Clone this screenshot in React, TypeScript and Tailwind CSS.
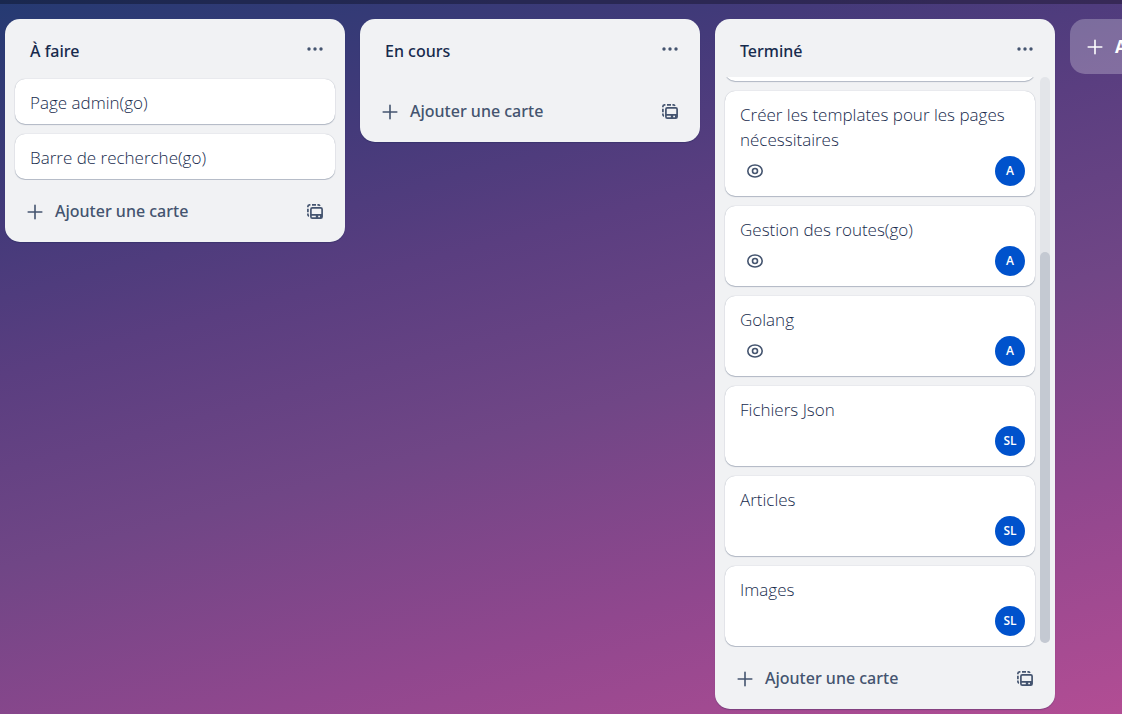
type Card = { title: string; watched?: boolean; member?: string };

const todo: Card[] = [{ title: "Page admin(go)" }, { title: "Barre de recherche(go)" }];

const done: Card[] = [
  { title: "Créer les templates pour les pages nécessitaires", watched: true, member: "A" },
  { title: "Gestion des routes(go)", watched: true, member: "A" },
  { title: "Golang", watched: true, member: "A" },
  { title: "Fichiers Json", member: "SL" },
  { title: "Articles", member: "SL" },
  { title: "Images", member: "SL" },
];

function PlusIcon() {
  return (
    <svg className="size-4 shrink-0" viewBox="0 0 16 16" fill="none" stroke="currentColor" strokeWidth="1.6" strokeLinecap="round" aria-hidden="true">
      <path d="M8 1.2v13.6M1.2 8h13.6" />
    </svg>
  );
}

function DotsIcon() {
  return (
    <svg className="h-4 w-4" viewBox="0 0 16 16" fill="currentColor" aria-hidden="true">
      <circle cx="2" cy="8" r="1.7" />
      <circle cx="8" cy="8" r="1.7" />
      <circle cx="14" cy="8" r="1.7" />
    </svg>
  );
}

function TemplateIcon() {
  return (
    <svg className="h-4 w-4" viewBox="0 0 16 16" fill="none" stroke="currentColor" strokeWidth="1.7" aria-hidden="true">
      <path d="M0.9 3.2V2.6Q0.9 0.9 2.4 0.9H3.4M5 0.9H9M10.4 0.9H11.6Q12.6 0.9 12.8 2M0.9 4.8V8.2M0.9 9.6V10.6Q0.9 11.9 2 12.1" />
      <rect x="3.9" y="3.9" width="11.2" height="10.2" rx="1.4" />
      <path d="M4 10h11v1.8H4z M8.8 11h2.4v3H8.8z M13 11h2v3h-2z" fill="currentColor" stroke="none" />
    </svg>
  );
}

function EyeIcon() {
  return (
    <svg className="h-4 w-4" viewBox="0 0 16 16" fill="none" stroke="currentColor" strokeWidth="1.6" role="img" aria-label="Suivi">
      <path d="M8 2C4.2 2 0.8 4.4 0.8 8s3.4 6 7.2 6S15.2 11.6 15.2 8 11.8 2 8 2Z" />
      <circle cx="8" cy="8" r="2.5" />
    </svg>
  );
}

function CardItem({ card }: { card: Card }) {
  return (
    <li className="shrink-0 rounded-[10px] bg-white pt-[11px] pr-[10px] pb-[9px] pl-[15px] shadow-[0_1px_1px_#091e4240,0_0_1px_#091e424f]">
      <a href="#" className="block text-[17px] leading-[25px] font-light text-[#172b4d]">
        {card.title}
      </a>
      {card.member && (
        <div className="mt-[4px] mb-px flex items-center">
          {card.watched && (
            <span className="ml-[7px] text-[#44546f]">
              <EyeIcon />
            </span>
          )}
          <span className="ml-auto flex size-[30px] items-center justify-center rounded-full bg-[#0052cc] text-xs font-semibold text-white">
            {card.member}
          </span>
        </div>
      )}
    </li>
  );
}

function List({ title, cards, scrolled = false }: { title: string; cards: Card[]; scrolled?: boolean }) {
  return (
    <section className="flex max-h-full w-[340px] shrink-0 flex-col rounded-[15px] bg-[#f1f2f4] shadow-[0_1px_1px_#091e4240]">
      <header className="flex h-[58px] shrink-0 items-center justify-between pt-[6px] pr-[22px] pl-[25px]">
        <h2 className="font-['Noto_Sans',sans-serif] text-base leading-[25px] font-medium text-[#172b4d]">{title}</h2>
        <button type="button" aria-label="Actions de liste" className="-mt-1 text-[#44546f]">
          <DotsIcon />
        </button>
      </header>
      <div className="flex min-h-0 gap-[5px] pr-[5px] pl-[10px]">
        <ol className="-mx-px -mb-px flex min-w-0 flex-1 flex-col justify-end gap-[10px] overflow-hidden px-px pt-[2px] pb-px">
          {scrolled && (
            <li aria-hidden="true" className="h-20 shrink-0 rounded-[10px] bg-white shadow-[0_1px_1px_#091e4240,0_0_1px_#091e424f]" />
          )}
          {cards.map((card) => (
            <CardItem key={card.title} card={card} />
          ))}
        </ol>
        {scrolled ? (
          <div className="mb-[3px] flex w-[10px] flex-col justify-end rounded-full bg-[#e3e5e9]" aria-hidden="true">
            <div className="h-[69%] rounded-full bg-[#c4c9d2]" />
          </div>
        ) : (
          <div />
        )}
      </div>
      <footer className="flex h-[63px] shrink-0 items-center justify-between pt-[2px] pr-[22px] pl-[22px] text-[#44546f]">
        <button type="button" className="flex items-center gap-3 font-['Noto_Sans',sans-serif] text-base leading-[25px] font-medium">
          <PlusIcon />
          Ajouter une carte
        </button>
        <button type="button" aria-label="Créer à partir d’un modèle">
          <TemplateIcon />
        </button>
      </footer>
    </section>
  );
}

export default function App() {
  return (
    <div className="flex h-screen flex-col overflow-hidden bg-[linear-gradient(165deg,#253a72_0%,#443a7a_22%,#5a3e80_37%,#704686_56%,#90478e_77%,#b24d94_100%)] font-['Open_Sans','Noto_Sans',sans-serif]">
      <div className="h-1 shrink-0 bg-black/30" />
      <main className="flex min-h-0 flex-1 items-start gap-[15px] overflow-hidden pt-[15px] pb-[5px] pl-[5px]">
        <List title="À faire" cards={todo} />
        <List title="En cours" cards={[]} />
        <List title="Terminé" cards={done} scrolled />
        <button
          type="button"
          className="flex h-[55px] w-[340px] shrink-0 items-center gap-3 rounded-[15px] bg-white/25 pl-[17px] text-[17px] leading-[25px] font-bold whitespace-nowrap text-white"
        >
          <PlusIcon />
          Ajouter une autre liste
        </button>
      </main>
    </div>
  );
}
